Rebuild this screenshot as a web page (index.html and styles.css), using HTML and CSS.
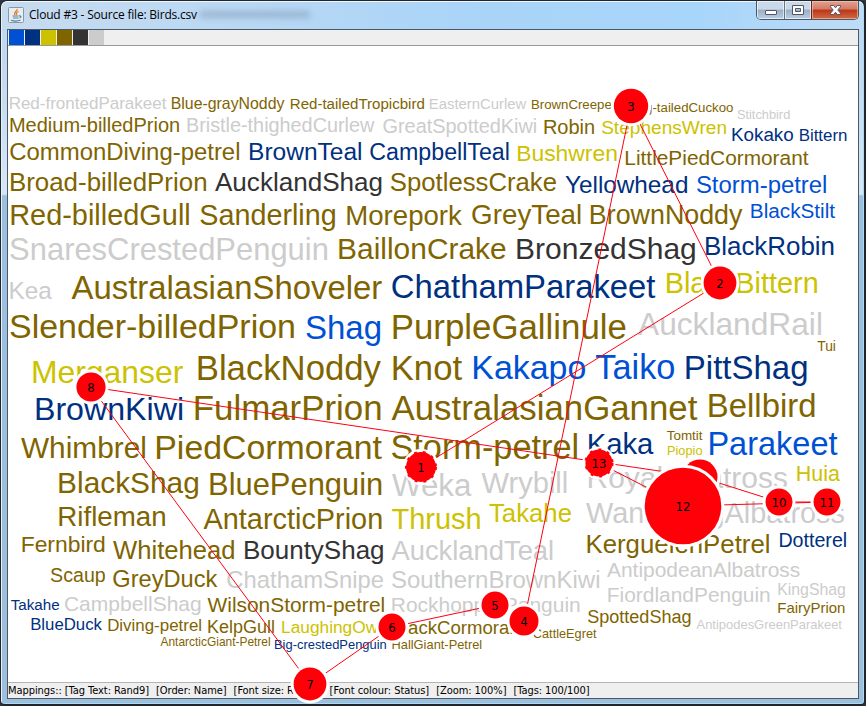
FILE: index.html
```html
<!DOCTYPE html>
<html lang="en">
<head>
<meta charset="utf-8">
<title>Cloud #3 - Source file: Birds.csv</title>
<link rel="stylesheet" href="styles.css">
</head>
<body>
<div class="window">
  <header class="titlebar">
    <svg class="java" viewBox="0 0 16 16" width="16" height="16">
      <rect x=".5" y=".5" width="15" height="15" rx="1" fill="#e6eef2" stroke="#8899a5"/>
      <path d="M9 2C10 4 5 5 7 8M10.5 4.5C8 5.5 8 6.5 9 8" fill="none" stroke="#e8731c" stroke-width="1.2"/>
      <path d="M4.5 9h6M5 11h5.500M3 13.300c3 1 7 1 9.500-.2M11 9c2.500-.6 2.500 1.500.5 2" fill="none" stroke="#55809e" stroke-width="1.100"/>
    </svg>
    <h1 class="title">Cloud #3 - Source file: Birds.csv</h1>
    <div class="ghost"></div>
    <div class="controls">
      <div class="btn min"><svg width="27" height="18"><rect x="8.500" y="9.500" width="11" height="4" rx=".5" fill="#fff" stroke="#545566"/></svg></div>
      <div class="btn max"><svg width="26" height="18"><path fill="#fff" fill-rule="evenodd" stroke="#545566" d="M7.500 4.500h11v9h-11zM10.500 7.500v3h5v-3z"/></svg></div>
      <div class="btn close"><svg width="46" height="18"><path fill="#fff" stroke="#545566" d="M18.500 4.500h3.200l1.800 2.300 1.800-2.300h3.200v1.300L25.800 9l2.700 3.200v1.300h-3.200l-1.800-2.300-1.800 2.300h-3.200v-1.300L21.200 9l-2.700-3.200z"/></svg></div>
    </div>
  </header>
  <main class="client">
    <div class="palette">
      <i class="sw blue"></i><i class="sw navy"></i><i class="sw yellow"></i><i class="sw brown"></i><i class="sw dark"></i><i class="sw grey"></i>
    </div>
    <div class="canvas">
      <svg class="cloud" viewBox="8 46 850 636" width="850" height="636">
        <g id="words"></g>
        <g id="links"></g>
        <g id="nodes"></g>
      </svg>
    </div>
    <footer class="status"><span>Mappings:: [Tag Text: Rand9]</span><span>[Order: Name]</span><span class="fs">[Font size: Rand4]</span><span>[Font colour: Status]</span><span>[Zoom: 100%]</span><span>[Tags: 100/100]</span></footer>
  </main>
</div>
<script src="cloud.js"></script>
</body>
</html>
```
FILE: styles.css
```css
* { box-sizing: border-box; }
body { margin: 0; background: #30363e; overflow: hidden; }
.window {
  width: 866px; height: 706px; padding: 0 7px 7px;
  display: flex; flex-direction: column;
  border: solid #20262c; border-width: 1px 2px 2px 1px;
  border-radius: 7px 7px 5px 5px;
  box-shadow: inset 1px 1px 0 #e3f3fc, inset -1px -1px 0 #a8dcf0;
  background: linear-gradient(#bcd9f3 0, #c3daf0 70px, #d7e6f6 193px, #9cbfe0 195px, #9dbedc 100%);
}
.titlebar {
  height: 28px; flex: none; display: flex; align-items: flex-start;
  margin: 0 -6px; padding-left: 6px;
  border-top: 1px solid #eef7fd; border-radius: 6px 6px 0 0;
  background: linear-gradient(90deg, #c7dbef 0, #bdd9f3 180px, #a9d4f8 480px, #a8d5fa 700px, #bedcf6 100%);
}
.java { margin-top: 5px; }
.title {
  margin: 5px 0 0 5px; width: 168px;
  font: 12px/16px "Open Sans", sans-serif; letter-spacing: -.2px; white-space: nowrap; color: #000;
}
.ghost { width: 110px; height: 7px; margin: 9px 0 0 3px; background: #7994ad; opacity: .5; filter: blur(3px); }
.controls {
  display: flex; height: 19px; margin: -1px 4px 0 auto;
  border: 1px solid #4c5865; border-top: 0; border-radius: 0 0 5px 5px; overflow: hidden;
}
.btn { height: 18px; box-shadow: inset 0 0 0 1px #ffffff99; background: linear-gradient(#c9d9e9 0 45%, #9aafc5 50%, #b9cfe4); }
.btn svg { display: block; }
.min { width: 27px; }
.max { width: 27px; border-left: 1px solid #687583; }
.close { width: 47px; border-left: 1px solid #682520; background: linear-gradient(#e5a190 0, #d27a65 45%, #bd3518 50%, #d06b43); box-shadow: inset 0 0 0 1px #ffc8b399; }
.client { flex: 1; display: flex; flex-direction: column; border: 1px solid #4a5966; margin-left: -1px; width: 852px; background: #fff; }
.palette { height: 16px; flex: none; display: flex; gap: 1px; padding-left: 1px; background: #efefef; border-bottom: 1px solid #999; }
.sw { width: 15px; height: 15px; }
.blue { background: #0050d4; fill: #0050d4; }
.navy { background: #003080; fill: #003080; }
.yellow { background: #ccc200; fill: #ccc200; }
.brown { background: #806400; fill: #806400; }
.dark { background: #333; fill: #333; }
.grey { background: #ccc; fill: #ccc; }
.canvas { flex: 1; min-height: 0; background: #fff; }
.cloud { display: block; overflow: visible; position: relative; z-index: 1; font-family: "Liberation Sans", Arial, sans-serif; }
.link { stroke: #ff0010; stroke-width: 1; }
.node { fill: #ff0008; stroke: #fff; stroke-width: 6; paint-order: stroke; }
.dashed { fill: none; stroke: #ff0008; stroke-width: 2; stroke-dasharray: 3 6; }
.num { font: 13px "DejaVu Sans Condensed", "DejaVu Sans", sans-serif; text-anchor: middle; fill: #000; }
.status {
  height: 16px; flex: none; display: flex; gap: 7px; white-space: nowrap;
  background: #efefef; border-top: 1px solid #b4b4b4;
  font: 11px/15px "DejaVu Sans Condensed", "DejaVu Sans", sans-serif; letter-spacing: -.06px; color: #000;
}
.fs { width: 89px; }
```
FILE: cloud.js
```js
// Each tag: text, colour class, left edge, right edge, baseline.
const tags = [
["Red-frontedParakeet","grey",10,166.5,109],["Blue-grayNoddy","brown",172,284.5,109],["Red-tailedTropicbird","brown",291,424,109],["EasternCurlew","grey",430,526.5,109],["BrownCreeper","brown",532,616,109],["Long-tailedCuckoo","brown",624,733,112],["Stitchbird","grey",737.5,789.5,119],
["Medium-billedPrion","brown",10.5,179,132],["Bristle-thighedCurlew","grey",187.5,374.5,132],["GreatSpottedKiwi","grey",383.5,536,133],["Robin","brown",544.5,594,134],["StephensWren","yellow",602,726,134],["Kokako","navy",732.5,793,141],["Bittern","navy",800,846.5,141],
["CommonDiving-petrel","brown",10.5,239,160],["BrownTeal","navy",250,361,160],["CampbellTeal","navy",370.5,508.5,160],["Bushwren","yellow",518,616.5,161],["LittlePiedCormorant","brown",626,808.5,165],
["Broad-billedPrion","brown",11,206,191],["AucklandShag","dark",215,381.5,191],["SpotlessCrake","brown",391,556,191],["Yellowhead","navy",565.5,687,193],["Storm-petrel","blue",697,826,193],
["Red-billedGull","brown",11.5,189,225],["Sanderling","brown",200.5,335,225],["Morepork","brown",347.5,462,225],["GreyTeal","brown",472.5,580.5,224],["BrownNoddy","brown",591,742.5,224],["BlackStilt","blue",751.5,835,218],
["SnaresCrestedPenguin","grey",10.5,327,260],["BaillonCrake","brown",339.5,505.5,259],["BronzedShag","dark",517.500,695,259],["BlackRobin","navy",706,833.5,255],
["Kea","grey",10.5,52,299],["AustralasianShoveler","brown",71.5,382,299],["ChathamParakeet","navy",392.5,655.5,298],["BlackBittern","yellow",667,817,293],
["Slender-billedPrion","brown",10.5,294,338],["Shag","blue",306.5,380,339],["PurpleGallinule","brown",393.500,625.5,339],["AucklandRail","grey",638,821,335],["Tui","brown",817.5,835,351],
["Merganser","yellow",33.500,183,383],["BlackNoddy","brown",198.500,381,379.500],["Knot","brown",393.500,462,380],["Kakapo","blue",474,585,379],["Taiko","blue",596,674,379],["PittShag","navy",686.500,806.500,379],
["BrownKiwi","navy",36.5,182,420],["FulmarPrion","brown",195.500,380.500,420],["AustralasianGannet","brown",391.5,697.5,420],["Bellbird","brown",709.5,814.5,417],
["Whimbrel","brown",21,145,458],["PiedCormorant","brown",157,382,459],["Storm-petrel","brown",392,577,459],["Kaka","navy",589,653.5,454],["Tomtit","brown",667,702.5,440],["Piopio","yellow",668,702,455],["Parakeet","blue",710,837.5,455],
["BlackShag","brown",59.5,198,493],["BluePenguin","brown",210.5,381.5,495],["Weka","grey",392,471.5,496],["Wrybill","grey",481.5,566.5,493],["RoyalAlbatross","grey",589,787,488],["Huia","yellow",797.5,840,481],
["Rifleman","brown",59.5,165,526],["AntarcticPrion","brown",203.5,381.5,529],["Thrush","yellow",392,480,529],["Takahe","yellow",489.5,571,522],["WanderingAlbatross","grey",586,844,523],
["Fernbird","brown",22.5,104.5,552],["Whitehead","brown",113,234,559],["BountyShag","dark",245,383,559],["AucklandTeal","grey",391.5,552.5,560],["KerguelenPetrel","brown",587.5,769,553],["Dotterel","navy",780,846,547],
["Scaup","brown",51,105,582],["GreyDuck","brown",113.5,217.5,587],["ChathamSnipe","grey",227.5,383,588],["SouthernBrownKiwi","grey",392,599,588],["AntipodeanAlbatross","grey",607,799.500,577],
["Takahe","navy",11,59,610],["CampbellShag","grey",65,200.5,611],["WilsonStorm-petrel","brown",207.5,384,612],["RockhopperPenguin","grey",392.500,579.500,612],["FiordlandPenguin","grey",608.5,769.5,602],["KingShag","grey",778.500,845,595],["FairyPrion","brown",778.5,844.5,613],
["BlueDuck","navy",31.5,102,630],["Diving-petrel","brown",108.5,201,631],["KelpGull","brown",208.500,274,633],["LaughingOwl","yellow",282.5,381,633],["BlackCormorant","brown",393,525,634],["SpottedShag","brown",588,690.5,623],["AntipodesGreenParakeet","grey",696.500,842,629],["CattleEgret","brown",533.5,596.5,638],
["AntarcticGiant-Petrel","brown",160.500,270,646],["Big-crestedPenguin","navy",275,386,649],["HallGiant-Petrel","brown",392.500,481.5,649]
];
// Each fixation, in visiting order: x, y, radius, dashed rim.
const stops = [
[421,467,15,true],[720,283,16.4],[631,106,17.2],[524,621,14.500],[495,605,13.500],[392,627,13.500],[310,684,16.400],[91,387,14.600],
[700,477,17.500],[779,502,13.500],[827,502,13.500],[683,506,38.300],[599,463,13.600,true]
];
const NS = "http://www.w3.org/2000/svg";
function add(parent, name, attrs, text) {
  const el = document.createElementNS(NS, name);
  for (const k in attrs) el.setAttribute(k, attrs[k]);
  if (text) el.textContent = text;
  document.getElementById(parent).appendChild(el);
}
// Size each tag so that its drawn glyphs span left..right.
const ctx = document.createElement("canvas").getContext("2d");
ctx.font = '200px "Liberation Sans", Arial, sans-serif';
for (const [text, colour, left, right, y] of tags) {
  const m = ctx.measureText(text);
  const size = 200 * (right - left) / (m.actualBoundingBoxRight + m.actualBoundingBoxLeft);
  const x = left + m.actualBoundingBoxLeft * size / 200;
  add("words", "text", { class: colour, x: x.toFixed(2), y, "font-size": size.toFixed(2) }, text);
}
stops.slice(1).forEach(([x2, y2], i) => {
  const [x1, y1] = stops[i];
  add("links", "line", { class: "link", x1, y1, x2, y2 });
});
stops.forEach(([cx, cy, r, dashed], i) => {
  add("nodes", "circle", { class: "node", cx, cy, r });
  if (dashed) add("nodes", "circle", { class: "dashed", cx, cy, r });
  if (i !== 8) add("nodes", "text", { class: "num", x: cx, y: cy + 5 }, String(i + 1));
});
```
